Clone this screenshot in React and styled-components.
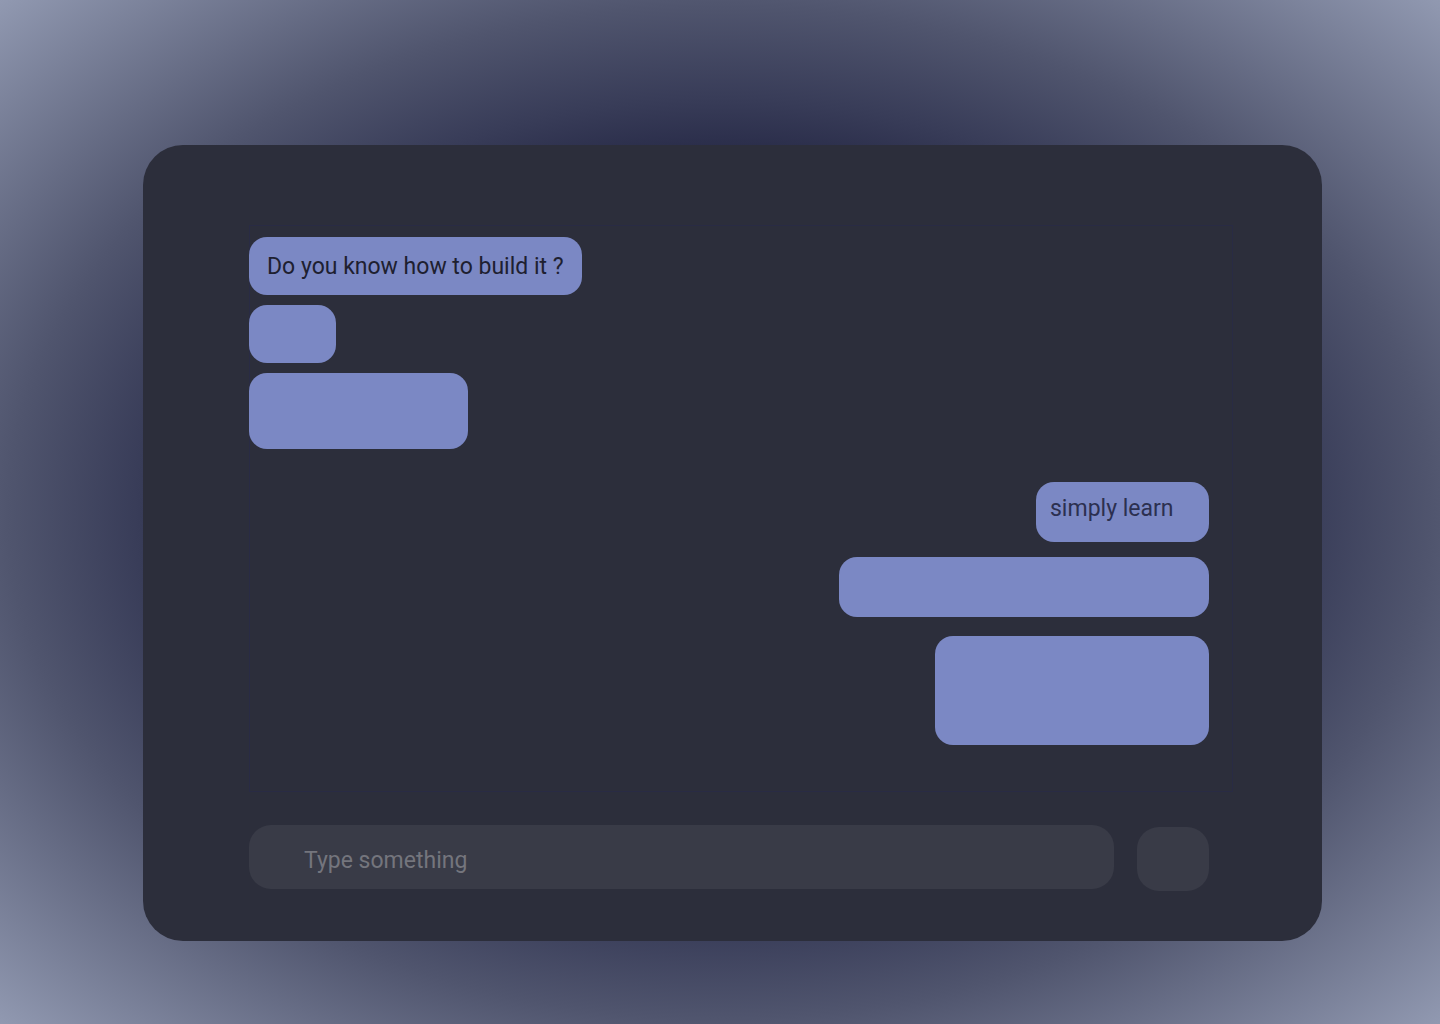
import React from "react";
import styled, { createGlobalStyle } from "styled-components";

const GlobalStyle = createGlobalStyle`
	html, body {
		margin: 0;
		padding: 0;
	}
	body {
		font-family: Roboto, "Liberation Sans", sans-serif;
		background: radial-gradient(ellipse at center, #1c1f3e 0%, #2a2d4a 50%, #383c58 57%, #50556e 70%, #9199b1 100%);
		min-height: 100vh;
	}
`;

const Page = styled.div`
	width: 1440px;
	height: 1024px;
	box-sizing: border-box;
	padding: 145px 0 0 143px;
`;

const Card = styled.div`
	width: 1179px;
	height: 796px;
	box-sizing: border-box;
	padding: 80px 89px 0 106px;
	background: #2c2e3b;
	border-radius: 40px;
	display: flex;
	flex-direction: column;
	gap: 33px;
`;

const ChatBox = styled.div`
	height: 567px;
	box-sizing: border-box;
	border: 1px solid #292b44;
	padding: 11px 23px 0 0;
	display: flex;
	flex-direction: column;
`;

const Bubble = styled.div`
	align-self: ${p => (p.$mine ? "flex-end" : "flex-start")};
	margin-left: ${p => (p.$mine ? "0" : "-1px")};
	margin-top: ${p => p.$gap || 0}px;
	width: ${p => (p.$w ? `${p.$w}px` : "auto")};
	height: ${p => p.$h}px;
	box-sizing: border-box;
	padding: ${p => (p.$mine ? "13px 14px" : "16px 18px")};
	background: #7b88c4;
	border-radius: 18px;
	font-size: 23px;
	line-height: 27px;
	color: ${p => (p.$mine ? "#2c3050" : "#1e2030")};
	white-space: nowrap;
`;

const InputRow = styled.div`
	display: flex;
	align-items: flex-start;
	gap: 23px;
	padding-right: 24px;
`;

const Input = styled.input`
	flex: 1;
	height: 64px;
	box-sizing: border-box;
	border: none;
	outline: none;
	border-radius: 22px;
	background: #393b47;
	padding: 6px 0 0 55px;
	font-family: Roboto, "Liberation Sans", sans-serif;
	font-size: 23px;
	color: #d0d0d8;

	&::placeholder {
		color: #74757d;
	}
`;

const SendButton = styled.button`
	width: 72px;
	height: 64px;
	margin-top: 2px;
	border: none;
	border-radius: 22px;
	background: #393b47;
	cursor: pointer;
`;

const messages = [
	{ id: 1, text: "Do you know how to build it ?", h: 58 },
	{ id: 2, text: "", w: 87, h: 58, gap: 10 },
	{ id: 3, text: "", w: 219, h: 76, gap: 10 },
	{ id: 4, text: "simply learn", mine: true, w: 173, h: 60, gap: 33 },
	{ id: 5, text: "", mine: true, w: 370, h: 60, gap: 15 },
	{ id: 6, text: "", mine: true, w: 274, h: 109, gap: 19 }
];

export default function App() {
	return (
		<>
			<GlobalStyle />
			<Page>
				<Card>
					<ChatBox>
						{messages.map(m => (
							<Bubble key={m.id} $mine={m.mine} $w={m.w} $h={m.h} $gap={m.gap}>
								{m.text}
							</Bubble>
						))}
					</ChatBox>
					<InputRow>
						<Input placeholder="Type something" />
						<SendButton aria-label="send" />
					</InputRow>
				</Card>
			</Page>
		</>
	);
}
